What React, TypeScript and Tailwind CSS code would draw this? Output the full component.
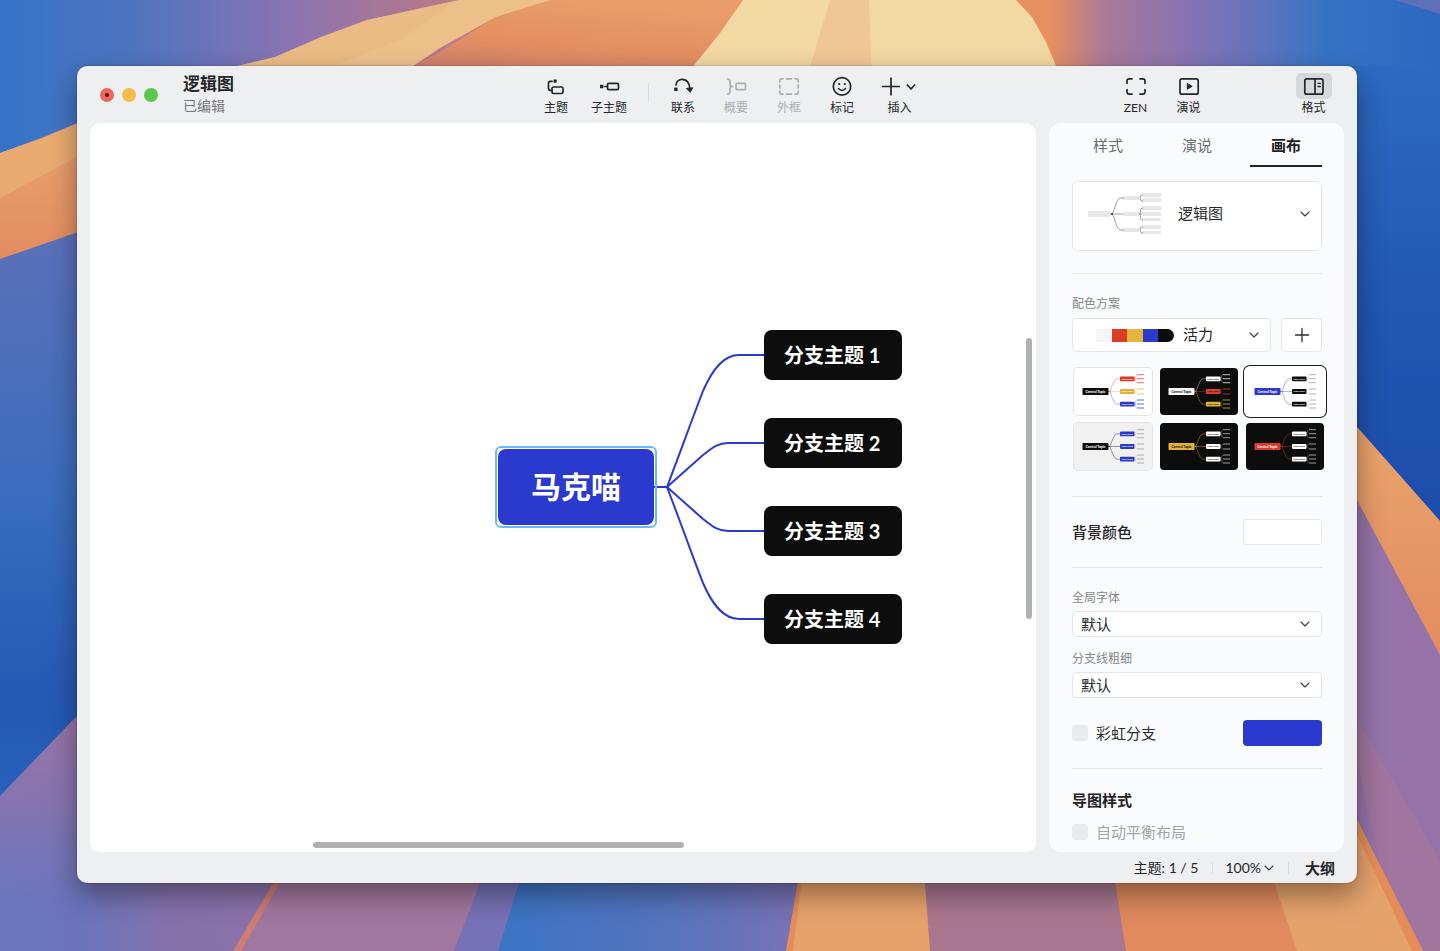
import type { ReactNode } from "react";

const BLUE = "#2a3acf";
const RED = "#dc3b2c";
const GOLD = "#e2b13c";
const INK = "#0d0d0d";

function Wallpaper() {
  return (
    <svg
      aria-hidden="true"
      className="absolute inset-0 h-full w-full"
      viewBox="0 0 1440 951"
      preserveAspectRatio="none"
    >
      <defs>
        <linearGradient id="top" x1="0" x2="1" y1="0" y2="0">
          <stop offset="0" stopColor="#3474c6" />
          <stop offset="0.09" stopColor="#4d74c0" />
          <stop offset="0.2" stopColor="#8a74b2" />
          <stop offset="0.29" stopColor="#b0778f" />
          <stop offset="0.42" stopColor="#e69463" />
          <stop offset="0.73" stopColor="#e68f5f" />
          <stop offset="0.77" stopColor="#a8789b" />
          <stop offset="0.83" stopColor="#8473b5" />
          <stop offset="0.88" stopColor="#5b74be" />
          <stop offset="0.92" stopColor="#3773c4" />
          <stop offset="1" stopColor="#2c68c0" />
        </linearGradient>
        <linearGradient id="topShade" x1="0" x2="0.4" y1="1" y2="0">
          <stop offset="0" stopColor="#c87b6c" />
          <stop offset="0.5" stopColor="#e38e62" />
          <stop offset="1" stopColor="#e99c67" />
        </linearGradient>
        <linearGradient id="left" x1="0" x2="0" y1="0" y2="1">
          <stop offset="0" stopColor="#7d70b2" />
          <stop offset="0.15" stopColor="#5a70ba" />
          <stop offset="0.45" stopColor="#3a6dbd" />
          <stop offset="0.7" stopColor="#2459b4" />
          <stop offset="1" stopColor="#2d6fc4" />
        </linearGradient>
        <linearGradient id="lowerLeft" x1="0" x2="1" y1="0" y2="0">
          <stop offset="0" stopColor="#6b76bd" />
          <stop offset="0.15" stopColor="#6b74bb" />
          <stop offset="0.3" stopColor="#8472ac" />
          <stop offset="1" stopColor="#a0769f" />
        </linearGradient>
        <linearGradient id="mauveFade" x1="0" x2="0" y1="0" y2="1">
          <stop offset="0" stopColor="#9a74a6" />
          <stop offset="1" stopColor="#9a74a6" stopOpacity="0" />
        </linearGradient>
        <linearGradient id="right" x1="0" x2="0" y1="0" y2="1">
          <stop offset="0" stopColor="#2d6ac2" />
          <stop offset="0.5" stopColor="#2257b4" />
          <stop offset="1" stopColor="#1d4cab" />
        </linearGradient>
        <linearGradient id="band" x1="0" x2="0" y1="0" y2="1">
          <stop offset="0" stopColor="#eaa66c" />
          <stop offset="1" stopColor="#e38c60" />
        </linearGradient>
        <linearGradient id="bottomBlue" x1="0" x2="1" y1="0" y2="0">
          <stop offset="0" stopColor="#3a74c4" />
          <stop offset="0.55" stopColor="#5674be" />
          <stop offset="1" stopColor="#7b72b4" />
        </linearGradient>
      </defs>
      <rect width="1440" height="951" fill="url(#top)" />
      <path d="M551 0H743L720 33L691 75H398L440 52L496 17Z" fill="url(#topShade)" />
      <path d="M459 0H551L496 17L440 48L400 75H200L275 57L321 37L367 20Z" fill="#edc08a" />
      <path d="M459 0L400 40L310 75H200L275 57L321 37L367 20Z" fill="#e8b47c" opacity="0.4" />
      <path d="M743 0H1016L1032 17L1046 42L1062 80H682L720 33Z" fill="#f2d8a2" />
      <path d="M830 0H869L872 80H806Z" fill="#efc794" />
      <path d="M1395 0H1440V14Z" fill="#5d70ba" />

      <path d="M0 153L77 123L120 120V951H0Z" fill="url(#left)" />
      <path d="M0 153L40 139L90 118V228L0 259Z" fill="url(#band)" />
      <path d="M0 198L90 150V118L40 139L0 153Z" fill="#eaab70" />
      <path d="M0 796L77 716H560V951H0Z" fill="url(#lowerLeft)" />
      <path d="M0 796L77 716H120V900H0Z" fill="url(#mauveFade)" />

      <path d="M280 870H490L454 951H234Z" fill="#a0779f" />
      <path d="M281 870H287L241 951H233Z" fill="#cd7d72" />
      <path d="M485 870H530L498 951H454Z" fill="#7672b5" />
      <path d="M523 870H806L787 951H498Z" fill="url(#bottomBlue)" />
      <path d="M800 870H806L793 951H786Z" fill="#e58d58" />
      <path d="M803 870H930V951H793Z" fill="#e7a26b" />
      <path d="M924 870H1120L1127 951H930Z" fill="#a8778f" />
      <path d="M1113 870H1275L1300 951H1126Z" fill="#e08a5e" />

      <path d="M1340 66H1440V540H1340Z" fill="url(#right)" />
      <path d="M1340 408L1357 427L1440 521V951H1340Z" fill="#9573a8" />
      <path d="M1340 408L1357 427L1440 521V655L1357 500L1340 480Z" fill="url(#band)" />
      <path d="M1340 690L1440 860V951H1400Z" fill="#a0759f" />
      <path d="M1270 870L1340 790L1357 820L1423 951H1297Z" fill="#e5a36c" />
      <path d="M1357 820L1423 951H1412L1350 820Z" fill="#e58d58" />
    </svg>
  );
}

function Glyph({ children, wide = false }: { children: ReactNode; wide?: boolean }) {
  return (
    <svg
      aria-hidden="true"
      className={wide ? "h-[26px] w-12" : "h-[26px] w-9"}
      viewBox={wide ? "0 0 48 26" : "0 0 36 26"}
      fill="none"
      stroke="currentColor"
      strokeWidth="1.7"
      strokeLinecap="round"
      strokeLinejoin="round"
    >
      {children}
    </svg>
  );
}

function Tool({
  label,
  children,
  disabled = false,
  active = false,
  wide = false,
}: {
  label: string;
  children: ReactNode;
  disabled?: boolean;
  active?: boolean;
  wide?: boolean;
}) {
  return (
    <button
      type="button"
      disabled={disabled}
      aria-pressed={active}
      className={`flex flex-col items-center gap-px text-[#242628] disabled:text-[#acaeb0] ${wide ? "w-[62px]" : "w-[53px]"}`}
    >
      <span className={active ? "rounded-[5px] bg-[#d5d8dc]" : ""}>
        <Glyph wide={wide}>{children}</Glyph>
      </span>
      <span className="text-xs leading-4">{label}</span>
    </button>
  );
}

function Chevron() {
  return (
    <svg
      aria-hidden="true"
      className="h-[10px] w-[10px]"
      viewBox="0 0 10 10"
      fill="none"
      stroke="#3a3c3f"
      strokeWidth="1.1"
      strokeLinecap="round"
      strokeLinejoin="round"
    >
      <path d="M1 3L5 7L9 3" />
    </svg>
  );
}

function StructureThumb() {
  return (
    <svg aria-hidden="true" className="h-[42px] w-[74px]" viewBox="0 0 74 42" fill="none">
      <g fill="#e6e7e8">
        <rect x="0" y="18" width="22" height="6" />
        <rect x="35" y="3" width="16" height="4" />
        <rect x="35" y="19" width="16" height="4" />
        <rect x="35" y="35" width="16" height="4" />
        <rect x="54" y="0" width="19" height="4" />
        <rect x="54" y="5" width="19" height="4" />
        <rect x="54" y="13" width="19" height="4" />
        <rect x="54" y="19" width="19" height="4" />
        <rect x="54" y="25" width="19" height="3" />
        <rect x="54" y="32" width="19" height="4" />
        <rect x="54" y="38" width="19" height="3" />
      </g>
      <g stroke="#6d7073" strokeWidth="0.7">
        <path d="M22 21H35M24 21C28 16 27 6 33 5H36M24 21C28 26 27 36 33 37H36" />
        <path d="M55 2H54Q52 2 52 5T54 8H55M55 15H54Q52 15 52 21T54 27H55M51 21H54M55 34H54Q52 34 52 37T54 40H55" />
      </g>
      <circle cx="24" cy="21" r="1" fill="#3c3e40" />
    </svg>
  );
}

type Theme = {
  name: string;
  bg: string;
  central: string;
  centralText: string;
  topics: [string, string, string];
  topicText: string;
  line: string;
};

const themes: Theme[] = [
  { name: "彩色", bg: "#ffffff", central: INK, centralText: "#fff", topics: [RED, GOLD, BLUE], topicText: "#fff", line: "tint" },
  { name: "深色彩虹", bg: INK, central: "#ffffff", centralText: "#111", topics: ["#ffffff", RED, GOLD], topicText: "#111", line: "tint" },
  { name: "蓝白", bg: "#ffffff", central: BLUE, centralText: "#fff", topics: [INK, INK, INK], topicText: "#fff", line: BLUE },
  { name: "浅灰", bg: "#f1f1f2", central: INK, centralText: "#fff", topics: [BLUE, BLUE, BLUE], topicText: "#fff", line: INK },
  { name: "深色金", bg: INK, central: GOLD, centralText: "#111", topics: ["#ffffff", "#ffffff", "#ffffff"], topicText: "#111", line: GOLD },
  { name: "深色红", bg: INK, central: RED, centralText: "#fff", topics: ["#ffffff", "#ffffff", "#ffffff"], topicText: "#111", line: RED },
];

const leafRows = [
  [6.7, 10.7, 14.7],
  [21, 26],
  [32, 36, 40],
];

function ThemeThumb({ theme }: { theme: Theme }) {
  const leaf = theme.bg === INK ? "#c9c9c9" : "#9a9a9a";
  return (
    <svg aria-hidden="true" className="h-[47px] w-full" viewBox="0 0 78 47">
      {theme.topics.map((color, i) => {
        const y = 10.8 + i * 12.7;
        const stroke = theme.line === "tint" ? color : theme.line;
        const leafColor = theme.line === "tint" ? color : leaf;
        return (
          <g key={i}>
            <path
              d={`M34.5 23.5H36Q40 ${y} 43 ${y}H46`}
              fill="none"
              stroke={stroke}
              strokeWidth="0.4"
            />
            <rect x="46" y={y - 2.4} width="14.5" height="4.8" rx="0.8" fill={color} />
            <text
              x="53.2"
              y={y + 0.9}
              textAnchor="middle"
              fontSize="2.4"
              fontWeight="700"
              fill={theme.topicText}
            >
              Main Topic
            </text>
            {leafRows[i].map((ly) => (
              <g key={ly}>
                <path d={`M60.5 ${y}L62.5 ${ly}`} stroke={leafColor} strokeWidth="0.3" />
                <rect x="63" y={ly - 0.5} width="7" height="1" fill={leafColor} opacity="0.75" />
              </g>
            ))}
          </g>
        );
      })}
      <rect x="8.5" y="20" width="26" height="7" rx="0.8" fill={theme.central} />
      <text
        x="21.5"
        y="24.8"
        textAnchor="middle"
        fontSize="3.4"
        fontWeight="900"
        fill={theme.centralText}
      >
        Central Topic
      </text>
    </svg>
  );
}

const thumbFrames = [
  "bg-white ring-1 ring-[#e3e4e6]",
  "bg-[#0d0d0d]",
  "bg-white ring-[1px] ring-[#1c1d1f] ring-offset-2 ring-offset-white",
  "bg-[#f1f1f2] ring-1 ring-[#e3e4e6]",
  "bg-[#0d0d0d]",
  "bg-[#0d0d0d]",
];

const fieldClass =
  "col-start-1 row-start-1 w-full appearance-none rounded-[4px] border border-[#e4e5e8] bg-white text-[15px] text-[#25272a]";

function PlainSelect({ id, label }: { id: string; label: string }) {
  return (
    <div className="flex flex-col gap-[3px]">
      <label htmlFor={id} className="text-xs leading-5 text-[#858789]">
        {label}
      </label>
      <div className="grid items-center">
        <select id={id} className={`${fieldClass} h-[26px] pl-2 leading-5`}>
          <option>默认</option>
        </select>
        <span className="pointer-events-none col-start-1 row-start-1 justify-self-end pr-3">
          <Chevron />
        </span>
      </div>
    </div>
  );
}

function Rule() {
  return <hr className="border-[#e6e7ea]" />;
}

function FormatPanel() {
  return (
    <aside className="flex w-[295px] shrink-0 flex-col overflow-hidden rounded-xl bg-[#fafbfd] pr-[22px] pl-[23px]">
      <div role="tablist" className="flex justify-between text-[15px] text-[#6b6d70]">
        <button type="button" role="tab" aria-selected="false" className="h-11 w-18">
          样式
        </button>
        <button type="button" role="tab" aria-selected="false" className="h-11 w-18">
          演说
        </button>
        <button
          type="button"
          role="tab"
          aria-selected="true"
          className="h-11 w-18 border-b-2 border-[#222426] pt-[2px] font-bold text-[#1d1f21]"
        >
          画布
        </button>
      </div>

      <div className="mt-[14px] mb-[22px] grid items-center">
        <select
          aria-label="结构"
          className={`${fieldClass} h-[70px] rounded-md pb-[6px] pl-[105px] leading-5`}
        >
          <option>逻辑图</option>
        </select>
        <span className="pointer-events-none col-start-1 row-start-1 flex items-center justify-between pr-3 pb-1 pl-4">
          <StructureThumb />
          <Chevron />
        </span>
      </div>
      <Rule />

      <label htmlFor="palette" className="mt-5 text-xs leading-5 text-[#858789]">
        配色方案
      </label>
      <div className="mt-1 flex gap-[10px]">
        <div className="grid flex-1 items-center">
          <select id="palette" className={`${fieldClass} h-[34px] pb-[2px] pl-[110px] leading-5`}>
            <option>活力</option>
          </select>
          <span className="pointer-events-none col-start-1 row-start-1 flex items-center justify-between pr-3 pl-6">
            <span className="flex h-[13px] w-[78px] overflow-hidden rounded-r-full">
              <span className="flex-1 bg-[#f5f5f6]" />
              <span className="flex-1 bg-[#dc3b26]" />
              <span className="flex-1 bg-[#e7b53b]" />
              <span className="flex-1 bg-[#2a3acf]" />
              <span className="flex-1 bg-[#0d0d0d]" />
            </span>
            <Chevron />
          </span>
        </div>
        <button
          type="button"
          aria-label="添加配色"
          className="flex h-[34px] w-[41px] items-center justify-center rounded-[4px] border border-[#e4e5e8] bg-white"
        >
          <svg className="h-4 w-4" viewBox="0 0 16 16" stroke="#2a2c2e" strokeWidth="1.3" strokeLinecap="round">
            <path d="M8 1.5V14.5M1.5 8H14.5" />
          </svg>
        </button>
      </div>

      <div className="mt-4 -mr-[2px] mb-[26px] grid grid-cols-3 gap-2 pl-[2px]">
        {themes.map((theme, i) => (
          <button
            key={theme.name}
            type="button"
            aria-label={theme.name}
            className={`h-[47px] overflow-hidden rounded-[4px] ${thumbFrames[i]}`}
          >
            <ThemeThumb theme={theme} />
          </button>
        ))}
      </div>
      <Rule />

      <div className="my-[22px] flex h-[26px] items-center justify-between text-[15px] text-[#1f2123]">
        <span className="font-medium">背景颜色</span>
        <button
          type="button"
          aria-label="背景颜色"
          className="h-[26px] w-[79px] rounded-[3px] border border-[#e8e9eb] bg-white"
        />
      </div>
      <Rule />

      <div className="mt-5 flex flex-col gap-3">
        <PlainSelect id="font" label="全局字体" />
        <PlainSelect id="stroke" label="分支线粗细" />
      </div>

      <div className="my-[22px] flex items-center justify-between">
        <label className="flex items-center gap-2 text-[15px] leading-5 text-[#2b2d30]">
          <input type="checkbox" className="h-4 w-4 appearance-none rounded-[3px] bg-[#e9eaec]" />
          彩虹分支
        </label>
        <button
          type="button"
          aria-label="分支颜色"
          className="h-[26px] w-[79px] rounded-[4px] bg-[#2a3acf]"
        />
      </div>
      <Rule />

      <h2 className="mt-[21px] text-[15px] leading-5 font-bold text-[#1f2123]">导图样式</h2>
      <label className="mt-3 flex items-center gap-2 pb-2 text-[15px] leading-5 text-[#a3a5a8]">
        <input
          type="checkbox"
          disabled
          className="h-4 w-4 appearance-none rounded-[3px] bg-[#e9eaec]"
        />
        自动平衡布局
      </label>
    </aside>
  );
}

const branches = [
  { label: "分支主题 1", place: "top-[207px]" },
  { label: "分支主题 2", place: "top-[295px]" },
  { label: "分支主题 3", place: "top-[383px]" },
  { label: "分支主题 4", place: "top-[471px]" },
];

function MindMap() {
  return (
    <main className="relative min-w-0 flex-1 overflow-hidden rounded-[10px] bg-white">
      <svg
        aria-hidden="true"
        className="absolute top-[207px] left-[560px] h-[314px] w-[120px]"
        viewBox="0 0 120 314"
        fill="none"
        stroke={BLUE}
        strokeWidth="2"
      >
        <path d="M4 157H18" />
        <path d="M114 25H89C74 25 63 38 53 61C44 84 33 115 17 157" />
        <path d="M114 113H78C66 113 60 120 53 125L17 157" />
        <path d="M114 201H78C66 201 60 194 53 189L17 157" />
        <path d="M114 289H89C74 289 63 276 53 253C44 230 33 199 17 157" />
      </svg>
      <div className="absolute top-[323px] left-[405px] rounded-md border-2 border-[#6bb8f5] p-px">
        <div className="flex h-[76px] w-[156px] items-center justify-center rounded-lg bg-[#2a3acf] pb-[2px] text-[30px] leading-10 font-bold text-white">
          马克喵
        </div>
      </div>
      {branches.map((b) => (
        <div
          key={b.label}
          className={`absolute left-[674px] flex h-[50px] w-[138px] items-center rounded-lg bg-[#0d0d0d] pl-5 text-[20px] leading-7 font-bold text-white ${b.place}`}
        >
          {b.label}
        </div>
      ))}
      <div className="absolute top-[215px] right-1 h-[281px] w-[6px] rounded-full bg-[#b0b1b2]" />
      <div className="absolute bottom-1 left-[223px] h-[6px] w-[371px] rounded-full bg-[#b0b1b2]" />
    </main>
  );
}

function TitleBar() {
  return (
    <header className="flex h-[57px] items-start">
      <div className="flex h-full flex-1 items-center gap-[25px] pl-[23px]">
        <div className="flex gap-2">
          <button
            type="button"
            aria-label="关闭"
            className="flex h-[14px] w-[14px] items-center justify-center rounded-full bg-[#e8695f]"
          >
            <span className="h-1 w-1 rounded-full bg-[#7a0d08]" />
          </button>
          <button type="button" aria-label="最小化" className="h-[14px] w-[14px] rounded-full bg-[#f4bd4b]" />
          <button type="button" aria-label="缩放" className="h-[14px] w-[14px] rounded-full bg-[#5bc84d]" />
        </div>
        <div className="pb-px">
          <h1 className="text-[17px] leading-6 font-bold text-[#242628]">逻辑图</h1>
          <p className="text-sm leading-5 text-[#75777a]">已编辑</p>
        </div>
      </div>

      <nav aria-label="工具" className="flex pt-[7px] pl-5">
        <Tool label="主题">
          <rect x="14" y="14" width="11" height="6.5" rx="1.5" />
          <path d="M14 8.3H12.5Q10.5 8.3 10.5 10.3V15.3Q10.5 17.3 12.5 17.3H14" />
          <rect x="15.5" y="6.5" width="3.2" height="3.2" fill="currentColor" stroke="none" />
        </Tool>
        <Tool label="子主题">
          <rect x="9" y="11.8" width="3.4" height="3.4" fill="currentColor" stroke="none" />
          <path d="M14 13.5H16.5" />
          <rect x="16.5" y="10.3" width="11" height="6.4" rx="1.4" />
        </Tool>
        <span className="mt-[10px] mr-2 ml-3 h-5 w-px bg-[#dcdde0]" />
        <Tool label="联系">
          <path d="M11 12C11.5 4.5 23.5 3.5 24.8 15" />
          <rect x="9.2" y="14.6" width="3.4" height="3.4" fill="currentColor" stroke="none" />
          <path d="M21.8 15.4L27.8 14.8L25.3 19Z" fill="currentColor" strokeWidth="1" />
        </Tool>
        <Tool label="概要" disabled>
          <path d="M9.5 6q2.5 0 2.5 2.5v2.5q0 2.4 2.5 2.5q-2.5 .1-2.5 2.5v2.5q0 2.5-2.5 2.5" />
          <rect x="18" y="10.4" width="9.5" height="6.2" rx="1" />
        </Tool>
        <Tool label="外框" disabled>
          <path d="M8.8 9V7.8Q8.8 5.8 10.8 5.8H12M15.5 5.8H20.5M24 5.8H25.2Q27.2 5.8 27.2 7.8V9M27.2 12V15M27.2 18V19.2Q27.2 21.2 25.2 21.2H24M20.5 21.2H15.5M12 21.2H10.8Q8.8 21.2 8.8 19.2V18M8.8 15V12" />
        </Tool>
        <Tool label="标记">
          <circle cx="18" cy="13.4" r="8.7" />
          <path d="M14.4 15.6Q18 19.4 21.6 15.6" strokeWidth="1.5" />
          <circle cx="15.2" cy="11" r="1.1" fill="currentColor" stroke="none" />
          <circle cx="20.8" cy="11" r="1.1" fill="currentColor" stroke="none" />
        </Tool>
        <Tool label="插入" wide>
          <path d="M15 5.2V21.8M6.7 13.5H23.3" />
          <path d="M31.4 12L35 16L38.6 12" />
        </Tool>
      </nav>

      <div className="flex flex-1 justify-end pt-[7px] pr-[17px]">
        <Tool label="ZEN">
          <path d="M9 10.3V8Q9 5.8 11.2 5.8H14M22 5.8H24.8Q27 5.8 27 8V10.3M27 16.7V19Q27 21.2 24.8 21.2H22M14 21.2H11.2Q9 21.2 9 19V16.7" />
        </Tool>
        <Tool label="演说">
          <rect x="9" y="5.8" width="18.2" height="15.4" rx="2" />
          <path d="M16.3 10.8V16.2L20.8 13.5Z" fill="currentColor" strokeWidth="1" />
        </Tool>
        <span className="w-[72px]" />
        <Tool label="格式" active>
          <rect x="8.8" y="5.8" width="18.2" height="15.4" rx="2" />
          <path d="M19 6V21" />
          <path d="M22 10.3H24.3M22 13.5H24.3" strokeWidth="1.3" />
        </Tool>
      </div>
    </header>
  );
}

export default function App() {
  return (
    <div className="relative flex min-h-screen overflow-hidden pt-[66px] pr-[83px] pb-[68px] pl-[77px] font-['Lato','Noto_Sans_CJK_SC',sans-serif]">
      <Wallpaper />
      <div className="relative flex min-w-0 flex-1 flex-col rounded-[10px] bg-[#eeeff1] shadow-[0_12px_28px_rgba(0,0,0,0.38),0_0_2px_rgba(0,0,0,0.4)]">
        <TitleBar />
        <div className="flex flex-1 gap-[13px] px-[13px]">
          <MindMap />
          <FormatPanel />
        </div>
        <footer className="flex h-[31px] items-center justify-end pr-[22px] text-[14px] leading-5 text-[#242628]">
          <span>主题: 1 / 5</span>
          <span className="mr-3 ml-[14px] h-3 w-px bg-[#dcdde0]" />
          <button type="button" className="flex items-center gap-[3px]">
            100% <Chevron />
          </button>
          <span className="mr-4 ml-[14px] h-3 w-px bg-[#dcdde0]" />
          <button type="button" className="text-[15px] font-bold">
            大纲
          </button>
        </footer>
      </div>
    </div>
  );
}
